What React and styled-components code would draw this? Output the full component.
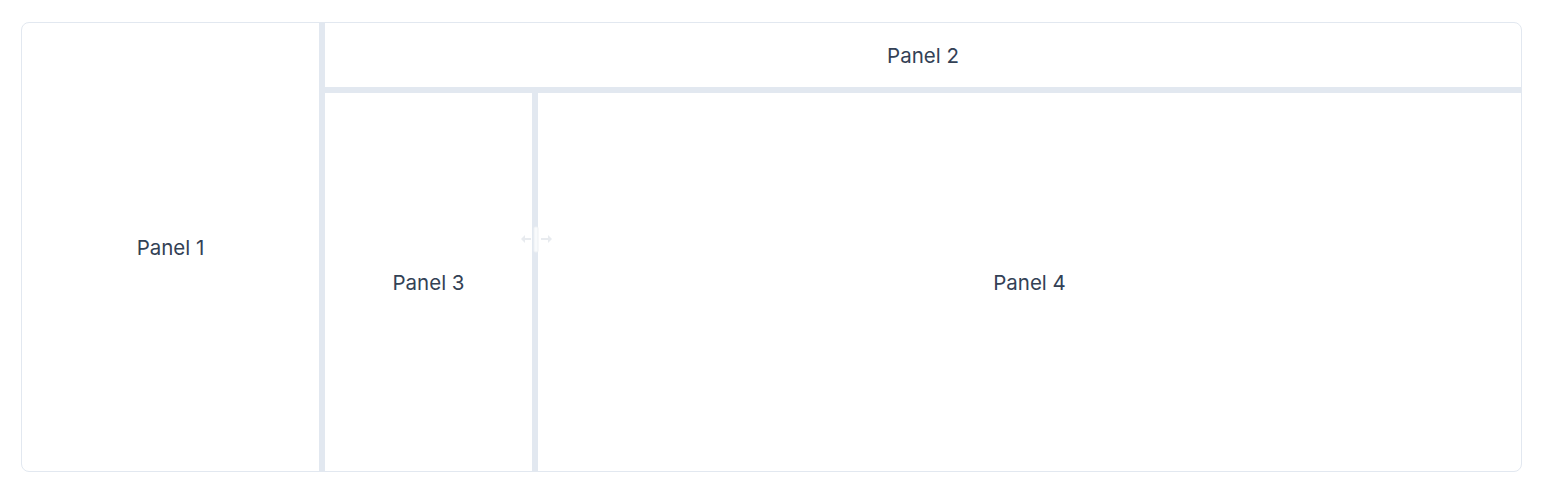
import React from 'react';
import styled, { createGlobalStyle } from 'styled-components';

const GlobalStyle = createGlobalStyle`
  html, body {
    margin: 0;
    padding: 0;
    background: #ffffff;
    font-family: Inter, "Noto Sans", sans-serif;
  }
`;

const Page = styled.div`
  padding: 22px 20px 16px 21px;
  box-sizing: border-box;
  height: 488px;
`;

const Group = styled.div`
  display: flex;
  flex-direction: ${p => (p.vertical ? 'column' : 'row')};
  flex: ${p => p.flex || '1 1 0'};
  min-width: 0;
  min-height: 0;
`;

const Frame = styled(Group)`
  height: 450px;
  border: 1px solid #e2e8f0;
  border-radius: 8px;
  overflow: hidden;
  box-sizing: border-box;
`;

const Panel = styled.div`
  display: flex;
  align-items: center;
  justify-content: center;
  flex: ${p => p.flex || '1 1 0'};
  box-sizing: border-box;
  min-width: 0;
  min-height: 0;
  padding-top: 1px;
  font-size: 20.5px;
  color: #334155;
`;

const Handle = styled.div`
  position: relative;
  flex: 0 0 6px;
  background: #e2e8f0;
`;

const Cursor = styled.svg`
  position: absolute;
  left: -12px;
  top: 132px;
  pointer-events: none;
`;

const ResizeCursor = () => (
  <Cursor width="34" height="30" viewBox="0 0 34 30">
    <rect x="14" y="2" width="4" height="25" rx="1" fill="#f8fafc" stroke="#edf0f3" strokeWidth="1" />
    <path d="M1 14 L5 10 L5 18 Z" fill="#e8ebef" />
    <path d="M4 14 H11" stroke="#e8ebef" strokeWidth="2" />
    <path d="M32 14 L28 10 L28 18 Z" fill="#e8ebef" />
    <path d="M21 14 H29" stroke="#e8ebef" strokeWidth="2" />
  </Cursor>
);

export default function App() {
  return (
    <>
      <GlobalStyle />
      <Page>
        <Frame>
          <Panel flex="0 0 297px">Panel 1</Panel>
          <Handle />
          <Group vertical>
            <Panel flex="0 0 64px">Panel 2</Panel>
            <Handle />
            <Group>
              <Panel flex="0 0 207px">Panel 3</Panel>
              <Handle>
                <ResizeCursor />
              </Handle>
              <Panel>Panel 4</Panel>
            </Group>
          </Group>
        </Frame>
      </Page>
    </>
  );
}
